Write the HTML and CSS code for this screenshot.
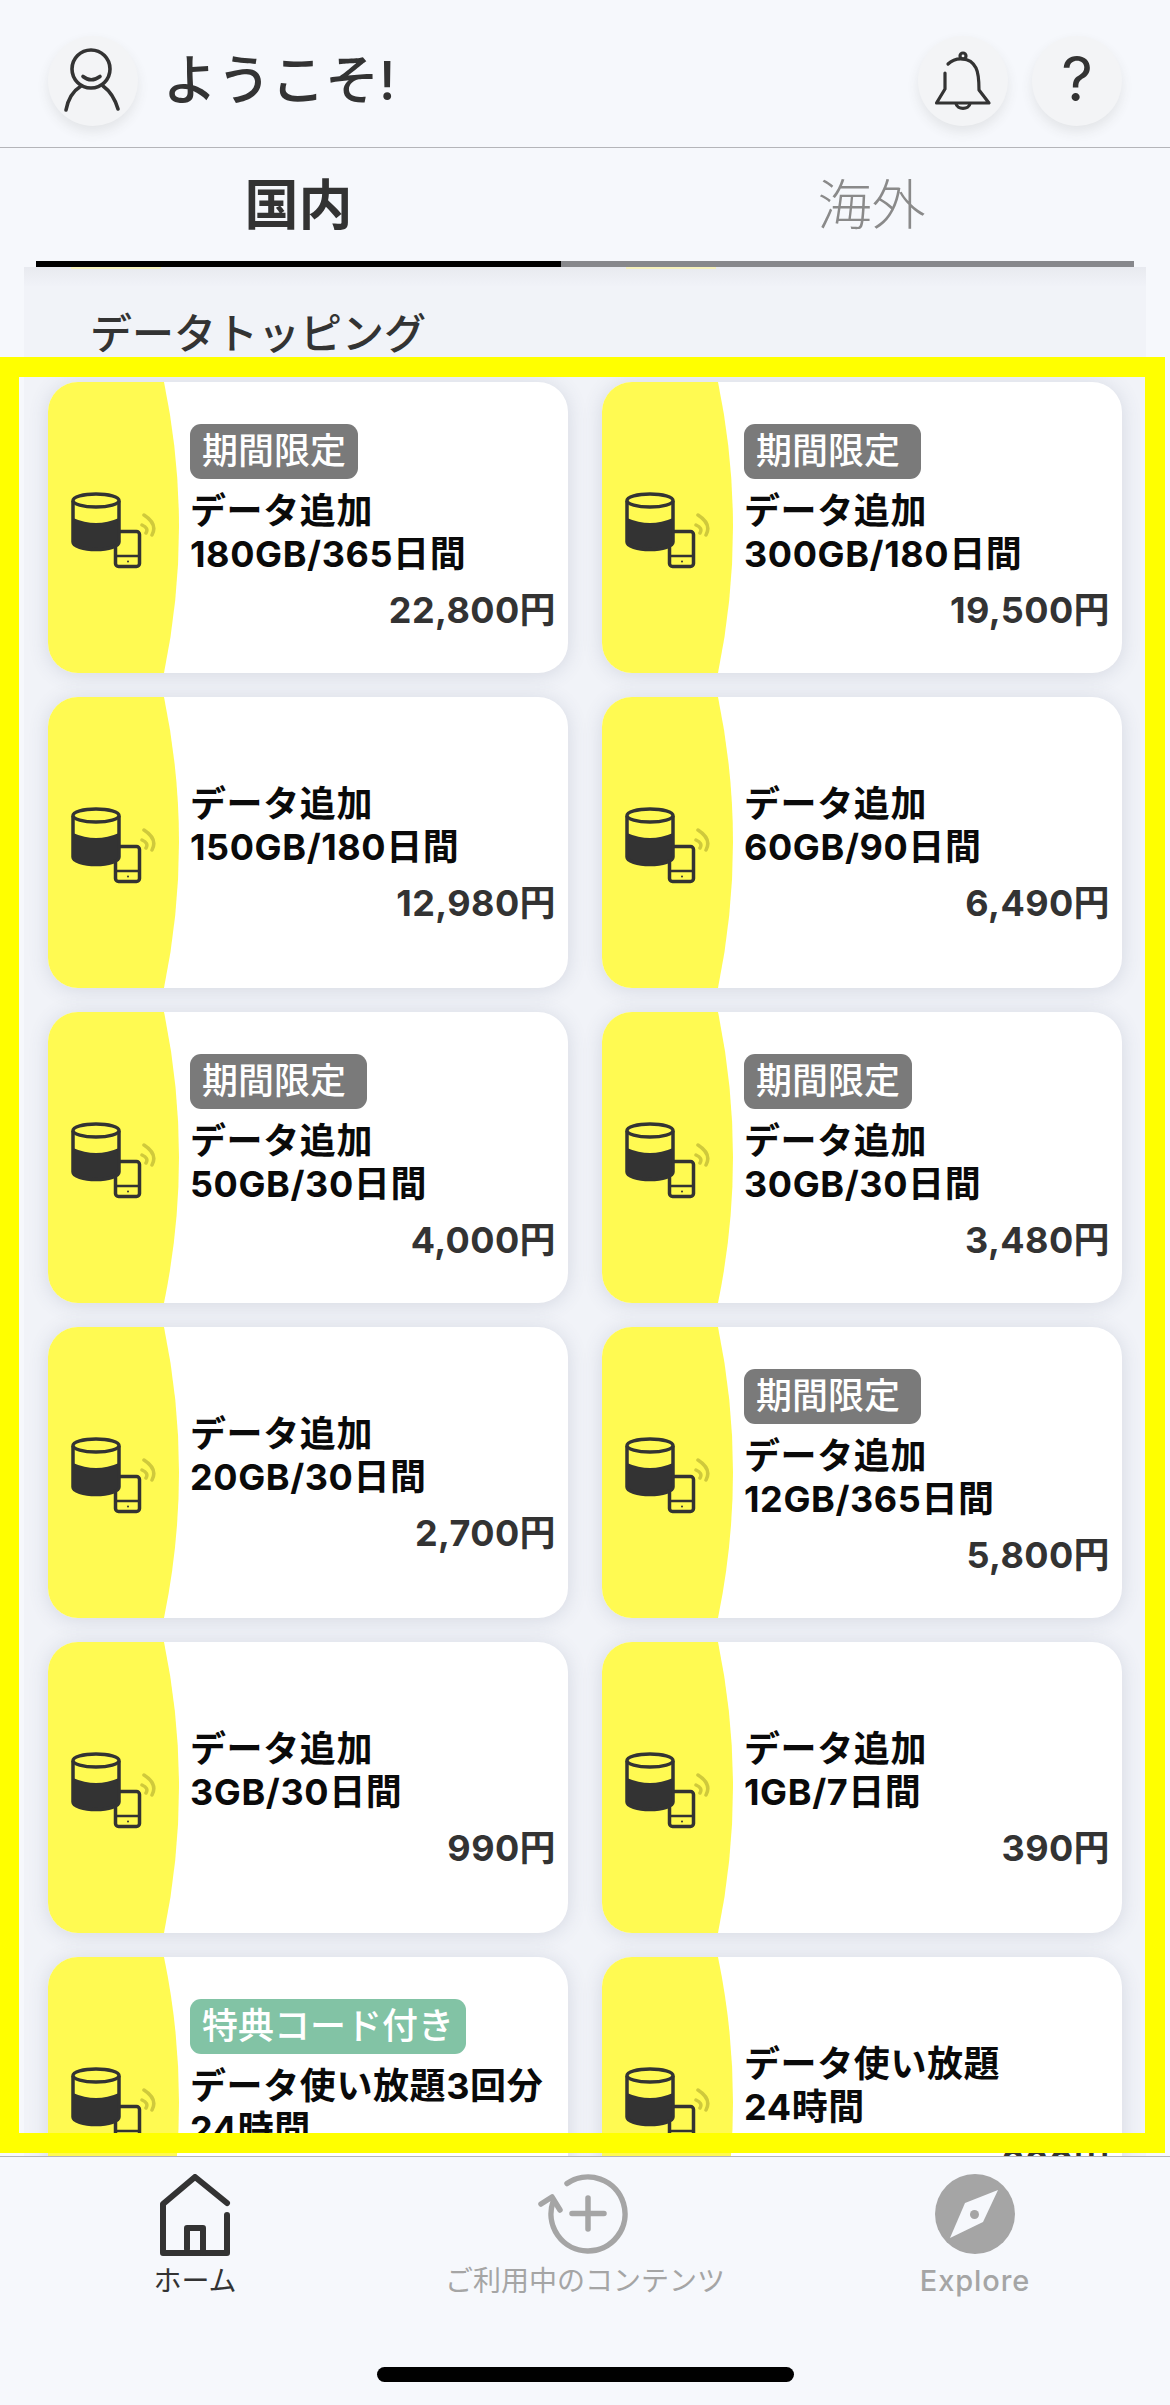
FILE: index.html
```html
<!DOCTYPE html>
<html lang="ja">
<head>
<meta charset="utf-8">
<title>ようこそ!</title>
<link rel="stylesheet" href="styles.css">
</head>
<body>
<svg class="defs" width="0" height="0" aria-hidden="true">
  <symbol id="data" viewBox="0 0 90 80">
    <rect x="47.5" y="41.5" width="24" height="35" rx="3" fill="none" stroke="#333" stroke-width="3.5"/>
    <path d="M47.5 66H71.5" stroke="#333" stroke-width="2.5"/>
    <circle cx="60" cy="71.5" r="1" fill="#333"/>
    <path d="M76 25Q90 34 84 45M74 35Q81 38 78 43" fill="none" stroke="#cfc93c" stroke-width="3.5" stroke-linecap="round"/>
    <path d="M5 28Q28 38 51 28V52C51 56 41 59.5 28 59.5C15 59.5 5 56 5 52Z" fill="#333"/>
    <path d="M5 11V52C5 56 15 59.5 28 59.5C41 59.5 51 56 51 52V11" fill="none" stroke="#333" stroke-width="3.5"/>
    <ellipse cx="28" cy="10.5" rx="23" ry="6.5" fill="none" stroke="#333" stroke-width="3.5"/>
  </symbol>
</svg>

<div class="page">
  <header class="top">
    <div class="round">
      <svg class="round-icon" viewBox="0 0 90 90">
        <g fill="none" stroke="#333" stroke-width="3.6" stroke-linecap="round">
          <circle cx="43" cy="33" r="19"/>
          <path d="M35 40.5Q43 47 52 40.5"/>
          <path d="M18 74C20 63 25 55 33 50"/>
          <path d="M70 73C67 63 62 55 55 50"/>
        </g>
      </svg>
    </div>
    <h1 class="welcome">ようこそ!</h1>
    <div class="top-actions">
      <div class="round">
        <svg class="round-icon" viewBox="0 0 90 90">
          <g fill="none" stroke="#333" stroke-width="3.2" stroke-linecap="round" stroke-linejoin="round">
            <circle cx="45" cy="20" r="3"/>
            <path d="M30 28C37 21 52 20 58 32C61 38 61 46 61 54L71 67H18.5L27 53V37"/>
            <path d="M38 67.5C39 74 51 74 52 67.5"/>
          </g>
        </svg>
      </div>
      <div class="round round-help">?</div>
    </div>
  </header>

  <nav class="tabs">
    <div class="tab tab-on">国内</div>
    <div class="tab tab-off">海外</div>
  </nav>

  <main class="panel">
    <span class="sliver sliver-a"></span>
    <span class="sliver sliver-b"></span>
    <h2 class="panel-title">データトッピング</h2>
    <div class="grid">
      <article class="card">
        <div class="leaf"><svg class="data-icon"><use href="#data"/></svg></div>
        <div class="body"><span class="badge">期間限定</span><p class="name">データ追加<br>180GB/365日間</p><p class="price">22,800円</p></div>
      </article>
      <article class="card">
        <div class="leaf"><svg class="data-icon"><use href="#data"/></svg></div>
        <div class="body"><span class="badge badge-wide">期間限定</span><p class="name">データ追加<br>300GB/180日間</p><p class="price">19,500円</p></div>
      </article>
      <article class="card">
        <div class="leaf"><svg class="data-icon"><use href="#data"/></svg></div>
        <div class="body body-plain"><p class="name">データ追加<br>150GB/180日間</p><p class="price">12,980円</p></div>
      </article>
      <article class="card">
        <div class="leaf"><svg class="data-icon"><use href="#data"/></svg></div>
        <div class="body body-plain"><p class="name">データ追加<br>60GB/90日間</p><p class="price">6,490円</p></div>
      </article>
      <article class="card">
        <div class="leaf"><svg class="data-icon"><use href="#data"/></svg></div>
        <div class="body"><span class="badge badge-wide">期間限定</span><p class="name">データ追加<br>50GB/30日間</p><p class="price">4,000円</p></div>
      </article>
      <article class="card">
        <div class="leaf"><svg class="data-icon"><use href="#data"/></svg></div>
        <div class="body"><span class="badge">期間限定</span><p class="name">データ追加<br>30GB/30日間</p><p class="price">3,480円</p></div>
      </article>
      <article class="card">
        <div class="leaf"><svg class="data-icon"><use href="#data"/></svg></div>
        <div class="body body-plain"><p class="name">データ追加<br>20GB/30日間</p><p class="price">2,700円</p></div>
      </article>
      <article class="card">
        <div class="leaf"><svg class="data-icon"><use href="#data"/></svg></div>
        <div class="body"><span class="badge badge-wide">期間限定</span><p class="name">データ追加<br>12GB/365日間</p><p class="price">5,800円</p></div>
      </article>
      <article class="card">
        <div class="leaf"><svg class="data-icon"><use href="#data"/></svg></div>
        <div class="body body-plain"><p class="name">データ追加<br>3GB/30日間</p><p class="price">990円</p></div>
      </article>
      <article class="card">
        <div class="leaf"><svg class="data-icon"><use href="#data"/></svg></div>
        <div class="body body-plain"><p class="name">データ追加<br>1GB/7日間</p><p class="price">390円</p></div>
      </article>
      <article class="card">
        <div class="leaf"><svg class="data-icon"><use href="#data"/></svg></div>
        <div class="body"><span class="badge badge-green">特典コード付き</span><p class="name">データ使い放題3回分<br>24時間</p></div>
      </article>
      <article class="card">
        <div class="leaf"><svg class="data-icon"><use href="#data"/></svg></div>
        <div class="body body-plain"><p class="name">データ使い放題<br>24時間</p><p class="price">880円</p></div>
      </article>
    </div>
  </main>

  <footer class="bottom">
    <div class="nav">
      <div class="nav-item nav-on">
        <svg class="nav-icon" viewBox="0 0 100 82">
          <g fill="none" stroke="#333" stroke-width="6" stroke-linecap="round" stroke-linejoin="round">
            <path d="M82 29L50 3L18 30V79H82V41"/>
            <path d="M42 75V54H58V79"/>
          </g>
        </svg>
        <span>ホーム</span>
      </div>
      <div class="nav-item">
        <svg class="nav-icon" viewBox="0 0 100 82">
          <g fill="none" stroke="#a5a5a5" stroke-width="5.5" stroke-linecap="round" stroke-linejoin="round">
            <path d="M32 9.5A37 37 0 1 1 18 28"/>
            <path d="M6 30L17 23L25 36"/>
            <path d="M37 39.5H69M53 24V55"/>
          </g>
        </svg>
        <span>ご利用中のコンテンツ</span>
      </div>
      <div class="nav-item">
        <svg class="nav-icon" viewBox="0 0 100 82">
          <circle cx="50" cy="40" r="40" fill="#a5a5a5"/>
          <path d="M73 16L40 29L25 64L58 48Z" fill="#f6f8fc"/>
          <circle cx="49.5" cy="40.5" r="4.5" fill="#a5a5a5"/>
        </svg>
        <span class="nav-latin">Explore</span>
      </div>
    </div>
    <div class="home-bar"></div>
  </footer>

  <div class="frame"></div>
</div>
</body>
</html>
```

FILE: styles.css
```css
* { box-sizing: border-box; }

html, body {
  margin: 0;
  padding: 0;
  height: 2405px;
  overflow: hidden;
  background: #f6f8fc;
}

body {
  font-family: Inter, "Noto Sans CJK JP", "Noto Sans", sans-serif;
  color: #333;
}

.defs { position: absolute; }

.page {
  position: relative;
  width: 1170px;
  height: 2405px;
  display: flex;
  flex-direction: column;
  overflow: hidden;
}

/* header */
.top {
  flex: 0 0 148px;
  display: flex;
  align-items: flex-start;
  padding: 36px 48px 0;
  border-bottom: 1px solid #b4b5b9;
}

.round {
  width: 90px;
  height: 90px;
  border-radius: 50%;
  background: #f3f4f6;
  box-shadow: 0 6px 12px rgba(70, 70, 60, 0.1);
  flex: none;
}

.round-icon { display: block; width: 90px; height: 90px; }

.round-help {
  text-align: center;
  font-size: 62px;
  font-weight: 400;
  line-height: 86px;
  color: #333;
}

.welcome {
  margin: 0 0 0 25px;
  font-size: 54px;
  font-weight: 500;
  line-height: 90px;
  color: #333;
}

.top-actions {
  margin-left: auto;
  display: flex;
  gap: 24px;
}

/* tabs */
.tabs {
  flex: 0 0 119px;
  display: flex;
  padding: 0 36px;
  position: relative;
  z-index: 2;
}

.tab {
  display: flex;
  align-items: center;
  justify-content: center;
  font-size: 54px;
  line-height: 1;
  padding-top: 2px;
  border-bottom: 6px solid #87888c;
}

.tab-on {
  flex: 0 0 525px;
  font-weight: 700;
  color: #333;
  border-bottom-color: #000;
}

.tab-off {
  flex: 1;
  padding-left: 48px;
  font-weight: 300;
  color: #8a8a8a;
}

/* panel */
.panel {
  position: relative;
  flex: 1;
  min-height: 0;
  margin: 0 24px;
  padding: 37px 24px 0;
  background: linear-gradient(rgba(60, 60, 80, 0.05), rgba(60, 60, 80, 0) 20px), #f1f3f8;
  overflow: hidden;
}

.sliver {
  position: absolute;
  top: 0;
  height: 2px;
  width: 90px;
  background: #f6f2bc;
}
.sliver-a { left: 47px; }
.sliver-b { left: 602px; }

.panel-title {
  margin: 0 0 18px 42px;
  font-size: 42px;
  font-weight: 500;
  line-height: 60px;
  color: #333;
}

.grid {
  display: grid;
  grid-template-columns: 520px 520px;
  grid-auto-rows: 291px;
  column-gap: 34px;
  row-gap: 24px;
}

.card {
  display: flex;
  background: #fff;
  border-radius: 30px;
  overflow: hidden;
  box-shadow: 0 2px 20px rgba(70, 80, 110, 0.16);
}

.leaf {
  flex: 0 0 131px;
  height: 291px;
  padding: 5px 0 0 20px;
  display: flex;
  align-items: center;
  background: #fffa52;
  clip-path: path("M0 0H116Q146 145 116 291H0Z");
}

.data-icon {
  display: block;
  width: 90px;
  height: 80px;
  flex: none;
}

.body {
  flex: 1;
  min-width: 0;
  padding: 42px 12px 0 11px;
}

.body-plain { padding-top: 86px; }

.badge {
  display: block;
  width: 168px;
  height: 55px;
  padding-left: 12px;
  margin-bottom: 11px;
  border-radius: 11px;
  background: #7a7a7a;
  color: #fff;
  font-size: 36px;
  font-weight: 500;
  line-height: 55px;
  white-space: nowrap;
}

.badge-wide { width: 177px; }

.badge-green {
  width: 276px;
  background: #82c3a5;
}

.name {
  margin: 0;
  font-size: 36px;
  font-weight: 700;
  letter-spacing: 0.6px;
  line-height: 43px;
  color: #0a0a0a;
  white-space: nowrap;
}

.price {
  margin: 12px 0 0;
  text-align: right;
  font-size: 36px;
  font-weight: 700;
  letter-spacing: 0.4px;
  line-height: 44px;
  color: #333;
}

/* footer */
.bottom {
  position: relative;
  z-index: 2;
  flex: 0 0 249px;
  padding-top: 17px;
  background: #f6f8fc;
  border-top: 1px solid #b4b5b9;
  display: flex;
  flex-direction: column;
}

.nav {
  display: grid;
  grid-template-columns: repeat(3, 1fr);
}

.nav-item {
  display: flex;
  flex-direction: column;
  align-items: center;
  color: #a5a5a5;
  font-size: 28px;
  line-height: 34px;
  white-space: nowrap;
}

.nav-on { color: #333; }

.nav-latin {
  font-size: 29px;
  font-weight: 500;
  letter-spacing: 0.9px;
}

.nav-icon {
  display: block;
  width: 100px;
  height: 82px;
  margin-bottom: 8px;
}

.home-bar {
  align-self: center;
  width: 417px;
  height: 15px;
  margin-top: 69px;
  border-radius: 8px;
  background: #000;
}

/* highlight rectangle lying over the page */
.frame {
  position: absolute;
  z-index: 3;
  left: 0;
  top: 357px;
  width: 1165px;
  height: 1796px;
  border: solid #ffff00;
  border-width: 20px 20px 20px 19px;
  pointer-events: none;
}
```
